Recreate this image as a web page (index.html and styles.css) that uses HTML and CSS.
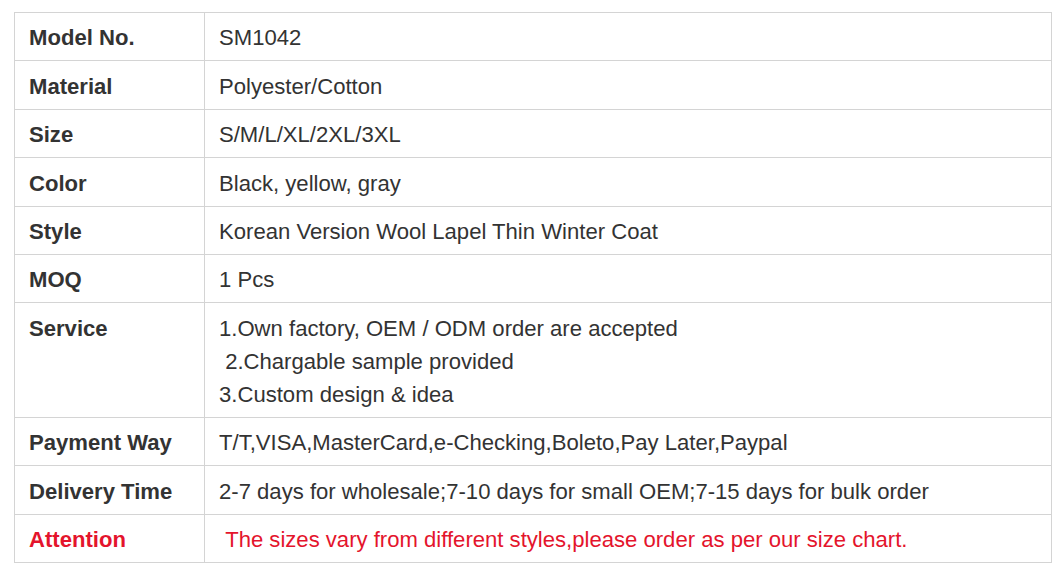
FILE: index.html
```html
<!DOCTYPE html>
<html>
<head>
<meta charset="utf-8">
<link rel="stylesheet" href="styles.css">
</head>
<body>
<table class="spec">
  <tr><th>Model No.</th><td>SM1042</td></tr>
  <tr><th>Material</th><td>Polyester/Cotton</td></tr>
  <tr><th>Size</th><td>S/M/L/XL/2XL/3XL</td></tr>
  <tr><th>Color</th><td>Black, yellow, gray</td></tr>
  <tr><th>Style</th><td>Korean Version Wool Lapel Thin Winter Coat</td></tr>
  <tr><th>MOQ</th><td>1 Pcs</td></tr>
  <tr><th>Service</th><td>1.Own factory, OEM / ODM order are accepted<br>&nbsp;2.Chargable sample provided<br>3.Custom design &amp; idea</td></tr>
  <tr><th>Payment Way</th><td>T/T,VISA,MasterCard,e-Checking,Boleto,Pay Later,Paypal</td></tr>
  <tr><th>Delivery Time</th><td>2-7 days for wholesale;7-10 days for small OEM;7-15 days for bulk order</td></tr>
  <tr class="attn"><th>Attention</th><td>&nbsp;The sizes vary from different styles,please order as per our size chart.</td></tr>
</table>
</body>
</html>
```
FILE: styles.css
```css
html, body {
  margin: 0;
  padding: 0;
  background: #ffffff;
}
body {
  font-family: "Liberation Sans", Arial, sans-serif;
  font-size: 22.1px;
  line-height: 33px;
  color: #333333;
}
.spec {
  margin: 12px 0 0 14px;
  width: 1038px;
  border-collapse: collapse;
  table-layout: fixed;
}
.spec th,
.spec td {
  border: 1px solid #d4d4d4;
  padding: 8.4px 14px 6px 14px;
  vertical-align: top;
  text-align: left;
}
.spec th {
  width: 161px;
  font-weight: bold;
}
.spec td {
  font-weight: normal;
}
.attn th,
.attn td {
  color: #e4142c;
}
```
